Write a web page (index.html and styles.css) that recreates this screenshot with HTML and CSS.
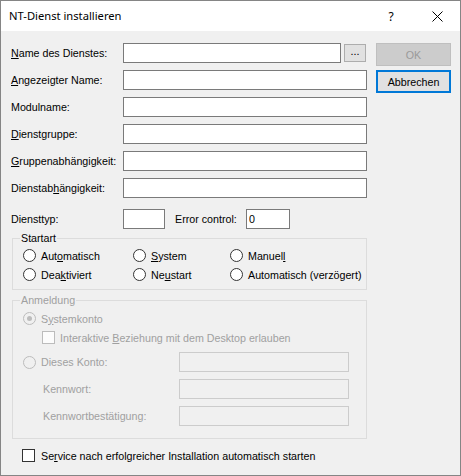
FILE: index.html
```html
<!DOCTYPE html>
<html lang="de">
<head>
<meta charset="utf-8">
<title>NT-Dienst installieren</title>
<link rel="stylesheet" href="styles.css">
</head>
<body>
<div class="window">
  <div class="titlebar">
    <span class="title">NT-Dienst installieren</span>
    <span class="capbtn help">?</span>
    <span class="capbtn close">
      <svg width="11" height="11" viewBox="0 0 11 11"><path d="M0.5 0.5 L10.5 10.5 M10.5 0.5 L0.5 10.5" stroke="#000" stroke-width="1" fill="none"/></svg>
    </span>
  </div>
  <div class="client">
    <div class="main">
      <div class="fields">
        <span class="lbl"><u>N</u>ame des Dienstes:</span>
        <div class="tb-row"><input class="tb short" type="text"><button class="browse">...</button></div>
        <span class="lbl"><u>A</u>ngezeigter Name:</span>
        <input class="tb" type="text">
        <span class="lbl">Modulname:</span>
        <input class="tb" type="text">
        <span class="lbl"><u>D</u>ienstgruppe:</span>
        <input class="tb" type="text">
        <span class="lbl"><u>G</u>ruppenabhängigkeit:</span>
        <input class="tb" type="text">
        <span class="lbl">Dienstab<u>h</u>ängigkeit:</span>
        <input class="tb" type="text">
      </div>
      <div class="typrow">
        <span class="lbl typ-lbl">Diensttyp:</span>
        <input class="tb typ" type="text">
        <span class="lbl err-lbl">Error control:</span>
        <input class="tb err" type="text" value="0">
      </div>
      <fieldset class="group startart">
        <legend>Startart</legend>
        <div class="radios">
          <span class="ritem"><span class="radio"></span><span class="t">Aut<u>o</u>matisch</span></span>
          <span class="ritem"><span class="radio"></span><span class="t"><u>S</u>ystem</span></span>
          <span class="ritem"><span class="radio"></span><span class="t">Manuel<u>l</u></span></span>
          <span class="ritem"><span class="radio"></span><span class="t">Dea<u>k</u>tiviert</span></span>
          <span class="ritem"><span class="radio"></span><span class="t">Ne<u>u</u>start</span></span>
          <span class="ritem"><span class="radio"></span><span class="t">Automatisch (verzögert)</span></span>
        </div>
      </fieldset>
      <fieldset class="group anm disabled">
        <legend>Anmeldung</legend>
        <span class="ritem sys"><span class="radio off checked"></span><span class="t">S<u>y</u>stemkonto</span></span>
        <span class="chk-row"><span class="check off"></span><span class="t">Interaktive <u>B</u>eziehung mit dem Desktop erlauben</span></span>
        <div class="acct">
          <span class="ritem"><span class="radio off"></span><span class="t">Dieses Konto:</span></span>
          <input class="tb dis" type="text" disabled>
          <span class="sublbl">Kennwort:</span>
          <input class="tb dis" type="text" disabled>
          <span class="sublbl">Kennwortbestätigung:</span>
          <input class="tb dis" type="text" disabled>
        </div>
      </fieldset>
      <div class="auto"><span class="check"></span><span class="t">Se<u>r</u>vice nach erfolgreicher Installation automatisch starten</span></div>
    </div>
    <div class="buttons">
      <button class="btn ok" disabled>OK</button>
      <button class="btn cancel">Abbrechen</button>
    </div>
  </div>
</div>
</body>
</html>
```
FILE: styles.css
```css
* { box-sizing: border-box; }
html, body { margin: 0; padding: 0; background: #ffffff; }
body {
  font-family: "Liberation Sans", Arial, sans-serif;
  font-size: 10.7px;
  color: #000;
}
u { text-decoration: underline; text-underline-offset: 1px; }

.window {
  width: 461px;
  height: 476px;
  border: 1px solid #858585;
  background: #f0f0f0;
  display: flex;
  flex-direction: column;
  overflow: hidden;
}

.titlebar {
  flex: none;
  height: 30px;
  background: #fff;
  display: flex;
  align-items: center;
}
.title {
  flex: 1;
  padding-left: 8px;
  font-family: "Noto Sans", "Open Sans", sans-serif;
  font-size: 11.2px;
  line-height: 30px;
}
.capbtn {
  width: 46px;
  height: 30px;
  display: flex;
  align-items: center;
  justify-content: center;
}
.help {
  font-family: "Noto Sans", sans-serif;
  font-size: 12px;
}

.client {
  flex: 1;
  display: flex;
  gap: 9px;
  padding: 12px 0 0 10px;
}
.main {
  width: 356px;
  flex: none;
  display: flex;
  flex-direction: column;
}

.fields {
  display: grid;
  grid-template-columns: 112px 244px;
  grid-auto-rows: 20px;
  row-gap: 7px;
  align-items: center;
}
.lbl { white-space: nowrap; }

.tb {
  display: block;
  height: 20px;
  width: 100%;
  margin: 0;
  border: 1px solid #7a7a7a;
  background: #fff;
  padding: 0 2px;
  font: inherit;
  color: #000;
  outline: none;
}
.tb-row {
  display: flex;
  align-items: center;
  gap: 3px;
}
.tb.short { width: 218px; }
.browse {
  width: 22px;
  height: 18px;
  margin: 0;
  padding: 0 0 4px;
  border: 1px solid #adadad;
  background: #e1e1e1;
  font: inherit;
  color: #000;
  display: flex;
  align-items: flex-end;
  justify-content: center;
}

.typrow {
  margin-top: 11px;
  height: 20px;
  display: flex;
  align-items: center;
}
.typ-lbl { width: 112px; }
.tb.typ { width: 42px; }
.err-lbl { width: 71px; margin-left: 10px; }
.tb.err { width: 44px; }

fieldset.group {
  margin: 3px 0 0 1px;
  min-width: 0;
  border: 1px solid #dcdcdc;
  padding: 1px 0 5px 7px;
}
fieldset.group legend {
  padding: 0 1px;
  line-height: 13px;
  font-size: 10.7px;
}
.radios {
  display: grid;
  grid-template-columns: 110px 97px auto;
  grid-auto-rows: 19px;
  padding-left: 3px;
}
.ritem {
  display: flex;
  align-items: center;
  gap: 5px;
  height: 19px;
  white-space: nowrap;
}
.t { white-space: nowrap; }
.radio {
  flex: none;
  width: 13px;
  height: 13px;
  border: 1px solid #333;
  border-radius: 50%;
  background: #fff;
  position: relative;
}
.radio.off {
  border-color: #bcbcbc;
  background: #f0f0f0;
}
.radio.checked::after {
  content: "";
  position: absolute;
  left: 3px;
  top: 3px;
  width: 5px;
  height: 5px;
  border-radius: 50%;
  background: #bcbcbc;
}
.check {
  flex: none;
  width: 13px;
  height: 13px;
  border: 1px solid #333;
  background: #fff;
}
.check.off {
  border-color: #bcbcbc;
  background: #fcfcfc;
}

fieldset.anm {
  margin-top: 4px;
  padding: 2px 0 12px 7px;
  color: #a0a0a0;
}
.ritem.sys { margin-left: 3px; }
.chk-row {
  display: flex;
  align-items: center;
  gap: 5px;
  height: 19px;
  padding-left: 22px;
  white-space: nowrap;
}
.acct {
  margin-top: 5px;
  display: grid;
  grid-template-columns: 159px 170px;
  grid-auto-rows: 20px;
  row-gap: 7px;
  align-items: center;
}
.acct .ritem { margin-left: 3px; }
.sublbl { padding-left: 23px; white-space: nowrap; }
.tb.dis {
  border-color: #cccccc;
  background: #f0f0f0;
}

.auto {
  margin: 9px 0 0 11px;
  height: 15px;
  display: flex;
  align-items: center;
  gap: 6px;
  white-space: nowrap;
}

.buttons {
  display: flex;
  flex-direction: column;
  gap: 4px;
}
.btn {
  width: 75px;
  height: 23px;
  margin: 0;
  padding: 0;
  font: inherit;
  color: #000;
  background: #e1e1e1;
  border: 1px solid #adadad;
}
.btn.ok {
  background: #cccccc;
  border-color: #bfbfbf;
  color: #9a9a9a;
}
.btn.cancel {
  border: 2px solid #0078d7;
}
```
